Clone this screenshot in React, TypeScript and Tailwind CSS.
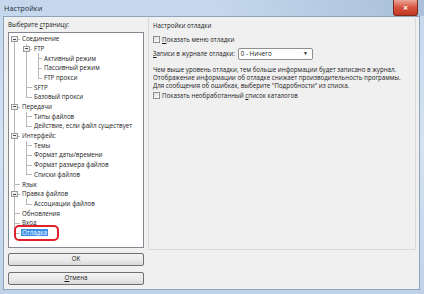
import React from "react";

type Node = { label: React.ReactNode; level: number; box?: boolean; selected?: boolean };

const items: Node[] = [
  { label: "Соединение", level: 0, box: true },
  { label: "FTP", level: 1, box: true },
  { label: "Активный режим", level: 2 },
  { label: "Пассивный режим", level: 2 },
  { label: "FTP прокси", level: 2 },
  { label: "SFTP", level: 1 },
  { label: "Базовый прокси", level: 1 },
  { label: "Передачи", level: 0, box: true },
  { label: "Типы файлов", level: 1 },
  { label: "Действие, если файл существует", level: 1 },
  { label: "Интерфейс", level: 0, box: true },
  { label: "Темы", level: 1 },
  { label: "Формат даты/времени", level: 1 },
  { label: "Формат размера файлов", level: 1 },
  { label: "Списки файлов", level: 1 },
  { label: "Язык", level: 0 },
  { label: "Правка файлов", level: 0, box: true },
  { label: "Ассоциации файлов", level: 1 },
  { label: "Обновления", level: 0 },
  { label: "Вход", level: 0 },
  { label: "Отладка", level: 0, selected: true },
];

function hasLaterSibling(i: number, d: number) {
  for (let j = i + 1; j < items.length; j++) {
    if (items[j].level < d) return false;
    if (items[j].level === d) return true;
  }
  return false;
}

function ancestorContinues(i: number, d: number) {
  for (let k = i; k >= 0; k--) {
    if (items[k].level === d) return hasLaterSibling(k, d);
  }
  return false;
}

const LINE = "bg-[#b8b8b8]";

function Row({ n, i }: { n: Node; i: number }) {
  const guides = [];
  for (let d = 0; d < n.level; d++) {
    guides.push(
      <div key={d} className="w-[12px] h-full relative shrink-0">
        {ancestorContinues(i, d) && <span className={`absolute left-[5px] top-0 bottom-0 w-px ${LINE}`} />}
      </div>
    );
  }
  const last = !hasLaterSibling(i, n.level);
  const first = i === 0;
  const own = n.level === 2 ? "w-[10px]" : "w-[12px]";
  return (
    <div className="h-[9.7px] flex items-stretch whitespace-nowrap">
      {guides}
      <div className={`${own} h-full relative shrink-0`}>
        {!first && <span className={`absolute left-[5px] top-0 h-1/2 w-px ${LINE}`} />}
        {!last && <span className={`absolute left-[5px] top-1/2 bottom-0 w-px ${LINE}`} />}
        <span className={`absolute left-[5px] top-1/2 right-[1px] h-px ${LINE}`} />
        {n.box && (
          <span className="absolute left-[2px] top-[2px] w-[7px] h-[6px] border border-[#9a9a9a] bg-gradient-to-br from-white to-[#e2e2e2] flex items-center justify-center">
            <span className="w-[3px] h-px bg-[#4a4a4a]" />
          </span>
        )}
      </div>
      <div className="relative flex items-center">
        <span
          className={
            n.selected
              ? "bg-[#3a8ee6] text-white leading-[7px] h-[7px] px-[1px]"
              : "text-[#1a1a1a] pl-[1px]"
          }
        >
          {n.label}
        </span>
        {n.selected && (
          <span className="absolute left-[-7px] top-[-3px] w-[45px] h-[16px] border-2 border-[#e0202a] rounded-[5px]" />
        )}
      </div>
    </div>
  );
}

function Check() {
  return (
    <span className="w-[7px] h-[7px] border border-[#8f8f8f] bg-gradient-to-br from-[#dcdcdc] to-white shrink-0" />
  );
}

export default function App() {
  return (
    <div
      className="w-[424px] h-[294px] relative overflow-hidden bg-gradient-to-b from-[#c4d7ec] via-[#d4e2f1] to-[#bfd2e8]"
      style={{ fontFamily: "'Open Sans', 'Noto Sans', sans-serif", fontSize: 6.2 }}
    >
      {/* title bar */}
      <div className="h-[16px] flex items-center pl-[4px] pr-[6px] relative bg-gradient-to-r from-transparent via-transparent to-[#a9c0da]">
        <span className="text-[7.3px] text-[#1e2a3a]">Настройки</span>
        <div className="absolute right-[6px] top-0 w-[25px] h-[16px] rounded-b-[3px] bg-gradient-to-b from-[#eaa496] via-[#d4533f] to-[#c3381f] border border-[#7a2c20] border-t-0 flex items-center justify-center">
          <span className="text-white text-[9px] font-bold leading-none">×</span>
        </div>
      </div>
      {/* client */}
      <div className="absolute left-[3px] right-[4px] top-[16px] bottom-[4px] bg-[#f0f0f0] border border-[#8ea4bd] flex">
        {/* left column */}
        <div className="w-[144px] pl-[4px] pt-[3px] flex flex-col">
          <div className="h-[10px] leading-[10px] text-[#1a1a1a] whitespace-nowrap">
            Выберите <span className="underline">с</span>траницу:
          </div>
          <div className="mt-[2px] w-[136px] h-[216px] bg-white border border-[#828790] pt-[1px] overflow-hidden">
            {items.map((n, i) => (
              <Row key={i} n={n} i={i} />
            ))}
          </div>
          <button className="mt-[5px] w-[136px] h-[13px] border border-[#707070] rounded-[2px] bg-gradient-to-b from-[#f3f3f3] via-[#ebebeb] to-[#d9d9d9] text-[#1a1a1a] leading-none">
            OK
          </button>
          <button className="mt-[6px] w-[136px] h-[13px] border border-[#707070] rounded-[2px] bg-gradient-to-b from-[#f3f3f3] via-[#ebebeb] to-[#d9d9d9] text-[#1a1a1a] leading-none">
            <span className="underline">О</span>тмена
          </button>
        </div>
        {/* right panel */}
        <div className="flex-1 pt-[1px] pr-[3px]">
          <div className="h-[232px] border border-[#dadada] border-t-0 pl-[4px] pt-[3px] text-[#1a1a1a] whitespace-nowrap">
            <div className="h-[9px] leading-[9px]">Настройки отладки</div>
            <div className="mt-[5px] h-[9px] flex items-center gap-[2px]">
              <Check />
              <span><span className="underline">П</span>оказать меню отладки</span>
            </div>
            <div className="mt-[3px] h-[14px] flex items-center gap-[3px]">
              <span><span className="underline">З</span>аписи в журнале отладки:</span>
              <div className="w-[75px] h-[12px] border border-[#8f8f8f] rounded-[2px] bg-white flex items-center justify-between pl-[2px] pr-[4px]">
                <span>0 - Ничего</span>
                <span className="text-[5px]">▼</span>
              </div>
            </div>
            <div className="mt-[5px] leading-[8px]">
              <div>Чем выше уровень отладки, тем больше информации будет записано в журнал.</div>
              <div>Отображение информации об отладке снижает производительность программы.</div>
              <div>Для сообщения об ошибках, выберите "Подробности" из списка.</div>
            </div>
            <div className="mt-[1px] h-[9px] flex items-center gap-[2px]">
              <Check />
              <span>Показать необработанный <span className="underline">с</span>писок каталогов</span>
            </div>
          </div>
        </div>
      </div>
    </div>
  );
}
